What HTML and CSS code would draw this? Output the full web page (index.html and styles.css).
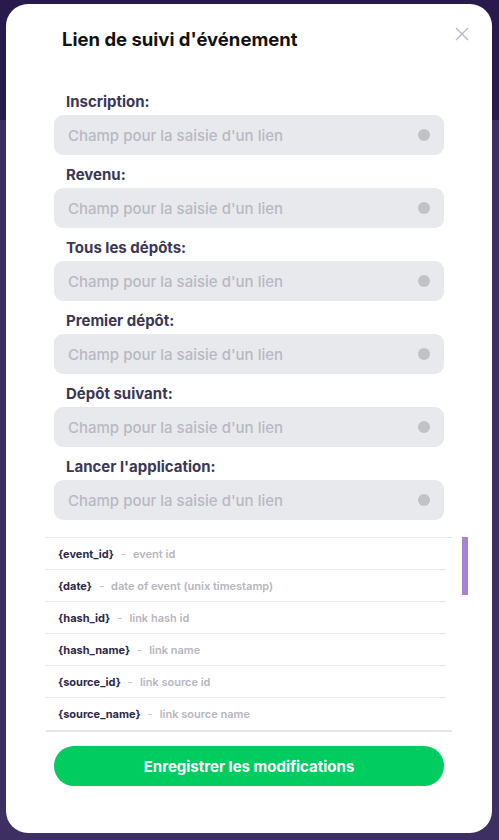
FILE: index.html
```html
<!DOCTYPE html>
<html lang="fr">
<head>
<meta charset="utf-8">
<title>Lien de suivi d'événement</title>
<link rel="stylesheet" href="styles.css">
</head>
<body>
<div class="backdrop-top"></div>
<div class="modal">
  <h1 class="title">Lien de suivi d'événement</h1>
  <button class="close" aria-label="Fermer">
    <svg width="14" height="14" viewBox="0 0 14 14"><path d="M1 1L13 13M13 1L1 13" stroke="#b9b9c6" stroke-width="1.4" fill="none"/></svg>
  </button>
  <div class="form">
    <div class="field"><label class="label">Inscription:</label><div class="input"><span class="ph">Champ pour la saisie d'un lien</span><span class="dot"></span></div></div>
    <div class="field"><label class="label">Revenu:</label><div class="input"><span class="ph">Champ pour la saisie d'un lien</span><span class="dot"></span></div></div>
    <div class="field"><label class="label">Tous les dépôts:</label><div class="input"><span class="ph">Champ pour la saisie d'un lien</span><span class="dot"></span></div></div>
    <div class="field"><label class="label">Premier dépôt:</label><div class="input"><span class="ph">Champ pour la saisie d'un lien</span><span class="dot"></span></div></div>
    <div class="field"><label class="label">Dépôt suivant:</label><div class="input"><span class="ph">Champ pour la saisie d'un lien</span><span class="dot"></span></div></div>
    <div class="field"><label class="label">Lancer l'application:</label><div class="input"><span class="ph">Champ pour la saisie d'un lien</span><span class="dot"></span></div></div>
  </div>
  <div class="params">
    <div class="list">
      <div class="row"><span class="key">{event_id}</span><span class="sep">-</span><span class="desc">event id</span></div>
      <div class="row"><span class="key">{date}</span><span class="sep">-</span><span class="desc">date of event (unix timestamp)</span></div>
      <div class="row"><span class="key">{hash_id}</span><span class="sep">-</span><span class="desc">link hash id</span></div>
      <div class="row"><span class="key">{hash_name}</span><span class="sep">-</span><span class="desc">link name</span></div>
      <div class="row"><span class="key">{source_id}</span><span class="sep">-</span><span class="desc">link source id</span></div>
      <div class="row"><span class="key">{source_name}</span><span class="sep">-</span><span class="desc">link source name</span></div>
    </div>
    <div class="scrollbar"></div>
  </div>
  <button class="save">Enregistrer les modifications</button>
</div>
</body>
</html>
```
FILE: styles.css
```css
* { box-sizing: border-box; }
html, body { margin: 0; padding: 0; }
body {
  width: 499px;
  height: 840px;
  overflow: hidden;
  background: #3d2f61;
  font-family: Inter, "Noto Sans", sans-serif;
  position: relative;
}
.backdrop-top {
  position: absolute;
  left: 0; top: 0;
  width: 499px; height: 120px;
  background: #281a4c;
}
.modal {
  position: relative;
  margin: 4px 0 0 6px;
  width: 486px;
  height: 829px;
  background: #fff;
  border-radius: 22px;
  padding: 24px 48px 0 48px;
}
.title {
  margin: 0 0 0 8px;
  font-size: 18.5px;
  line-height: 22px;
  font-weight: 700;
  color: #111;
  letter-spacing: 0;
}
.close {
  position: absolute;
  top: 23px; right: 23px;
  width: 14px; height: 14px;
  padding: 0; border: 0; background: none;
}
.close svg { display: block; }
.form {
  margin-top: 42px;
  display: flex;
  flex-direction: column;
  gap: 10px;
}
.field { display: flex; flex-direction: column; gap: 4px; }
.label {
  padding-left: 12px;
  font-size: 15px;
  line-height: 19px;
  font-weight: 700;
  color: #3a3855;
}
.input {
  height: 40px;
  border-radius: 9px;
  background: #e8e9ed;
  display: flex;
  align-items: center;
  justify-content: space-between;
  padding: 0 14px 0 14px;
}
.ph {
  font-size: 15px;
  color: #b8b8c2;
  font-weight: 500;
}
.dot {
  width: 12px; height: 12px;
  border-radius: 50%;
  background: #c2c2c4;
}
.params {
  position: relative;
  margin: 17px 0 0 -8px;
  width: 424px;
}
.list {
  width: 406px;
  border-top: 1px solid #e6e6ea;
  border-bottom: 2px solid #e6e6ea;
}
.row {
  width: 400px;
  height: 32px;
  display: flex;
  align-items: center;
  padding-left: 12px;
  font-size: 11px;
  font-weight: 700;
  border-bottom: 1px solid #e6e6ea;
}
.row:last-child { border-bottom: 0; }
.key { color: #2c2a48; }
.sep { color: #c4c4cc; margin: 0 7px; font-weight: 500; }
.desc { color: #b6b6c0; font-weight: 600; }
.scrollbar {
  position: absolute;
  left: 416px; top: 0;
  width: 6px; height: 58px;
  background: #a584cb;
}
.save {
  display: block;
  margin-top: 14px;
  width: 390px;
  height: 40px;
  border: 0;
  border-radius: 20px;
  background: #00cc5f;
  color: #fff;
  font-family: Inter, "Noto Sans", sans-serif;
  font-size: 15px;
  font-weight: 700;
}
```
